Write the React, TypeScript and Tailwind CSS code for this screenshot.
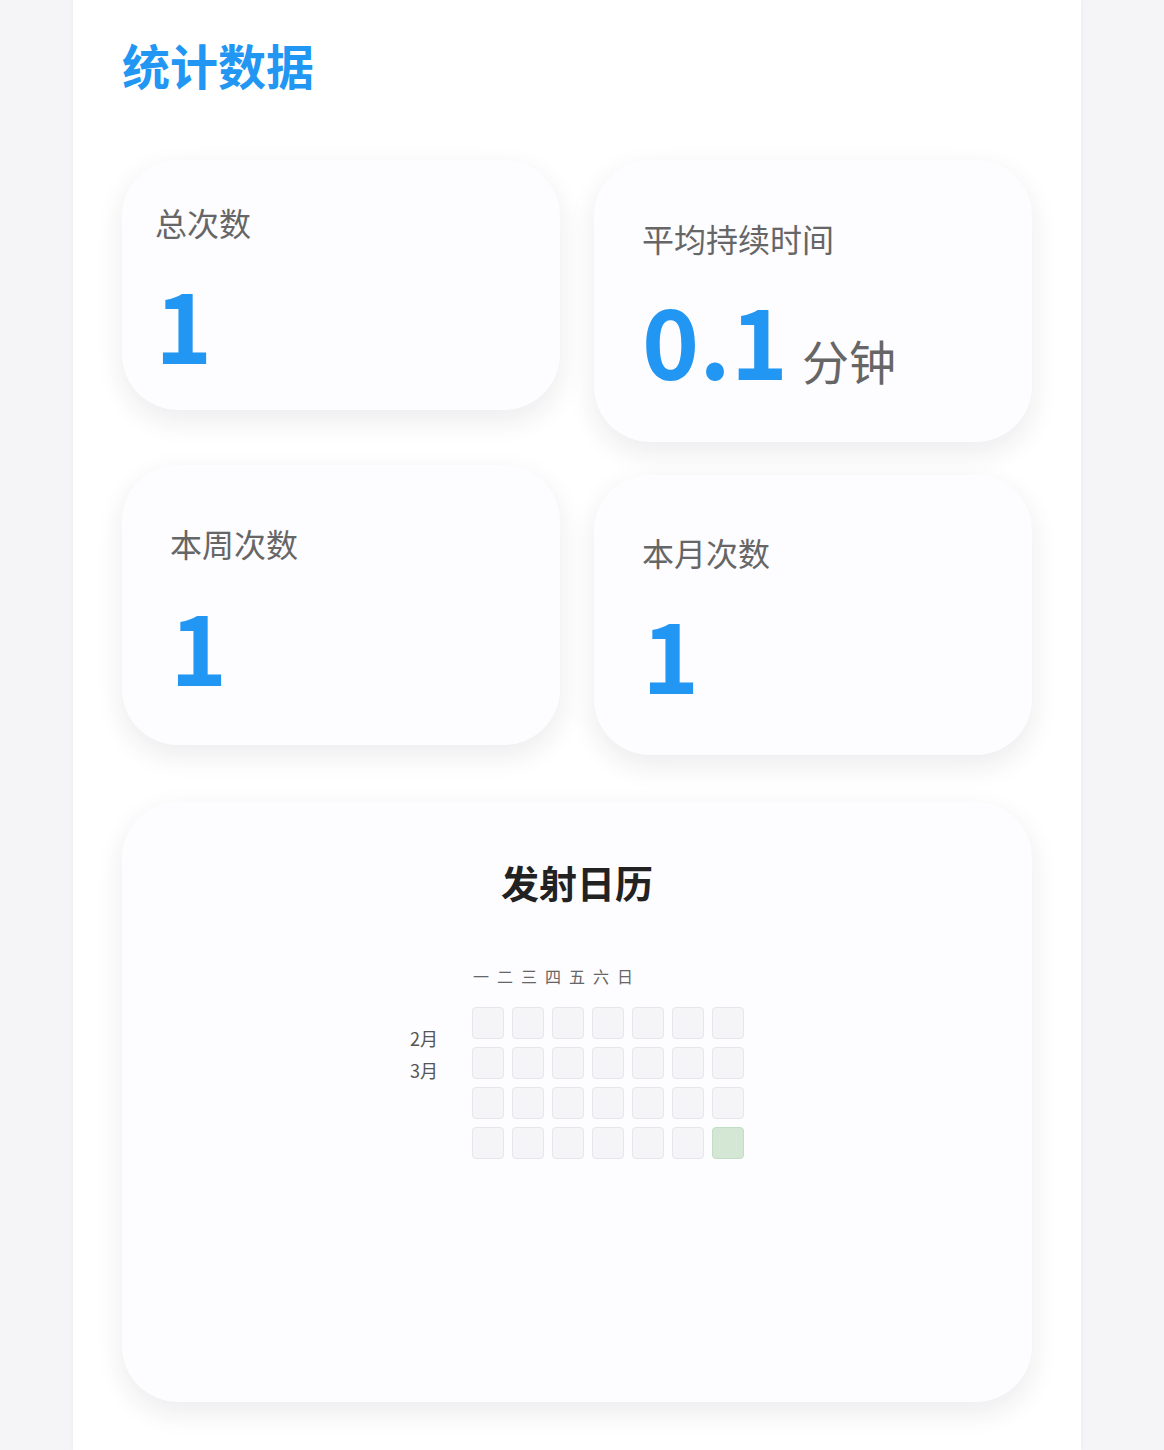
import React from 'react';

const font = { fontFamily: '"Noto Sans CJK SC", "Noto Sans", sans-serif' };

type StatProps = {
  label: string;
  value: string;
  unit?: string;
  className: string;
  labelGap: string;
};

const StatCard = ({ label, value, unit, className, labelGap }: StatProps) => (
  <div
    className={`rounded-[56px] bg-[#fdfcfe] shadow-[0_10px_28px_rgba(40,30,60,0.09)] ${className}`}
  >
    <p className="text-[32px] leading-none text-[#666666]">{label}</p>
    <div className={`flex items-baseline ${labelGap}`}>
      <span className="text-[97px] font-bold leading-none text-[#2196f3]">{value}</span>
      {unit && <span className="ml-[14px] text-[47px] leading-none text-[#666666]">{unit}</span>}
    </div>
  </div>
);

const weekDays = ['一', '二', '三', '四', '五', '六', '日'];

const Calendar = () => {
  const cells = Array.from({ length: 28 }, (_, i) => i);

  return (
    <div className="mt-[47px] h-[600px] rounded-[56px] bg-[#fdfcfe] pt-[61px] shadow-[0_10px_28px_rgba(40,30,60,0.09)]">
      <h2 className="text-center text-[38px] font-bold leading-none text-[#222222]">发射日历</h2>

      <div className="mt-[67px] flex justify-center">
        <div className="mr-[33px] pt-[54px] text-[18px] leading-[32px] text-[#555555]">
          <p>2月</p>
          <p>3月</p>
        </div>
        <div>
          <div className="flex gap-2 pl-[2px] text-[16px] leading-none text-[#666666]">
            {weekDays.map((d) => (
              <span key={d}>{d}</span>
            ))}
          </div>
          <div className="mt-[23px] grid grid-cols-7 gap-2 pl-px">
            {cells.map((i) => (
              <div
                key={i}
                className={
                  i === 27
                    ? 'h-8 w-8 rounded-[4px] border border-[#c3dcc5] bg-[#d4e7d5]'
                    : 'h-8 w-8 rounded-[4px] border border-[#e7e6ea] bg-[#f5f4f7]'
                }
              />
            ))}
          </div>
        </div>
      </div>
    </div>
  );
};

const App = () => {
  return (
    <div className="min-h-screen bg-[#f5f4f7]" style={font}>
      <div className="ml-[73px] w-[1008px] bg-white px-[49px] pb-12 pt-[40px] shadow-[0_0_6px_rgba(0,0,0,0.05)]">
        <h1 className="text-[48px] font-bold leading-none text-[#2196f3]">统计数据</h1>

        <div className="mt-[72px] grid grid-cols-2 items-start gap-x-[34px] gap-y-[23px]">
          <StatCard
            label="总次数"
            value="1"
            className="h-[250px] pl-[33px] pt-[46px]"
            labelGap="mt-[35px]"
          />
          <StatCard
            label="平均持续时间"
            value="0.1"
            unit="分钟"
            className="h-[282px] pl-[48px] pt-[62px]"
            labelGap="mt-[35px]"
          />
          <StatCard
            label="本周次数"
            value="1"
            className="h-[280px] pl-[48px] pt-[62px]"
            labelGap="mt-[36px]"
          />
          <StatCard
            label="本月次数"
            value="1"
            className="mt-[10px] h-[280px] pl-[48px] pt-[61px]"
            labelGap="mt-[35px]"
          />
        </div>

        <Calendar />
      </div>
    </div>
  );
};

export default App;
